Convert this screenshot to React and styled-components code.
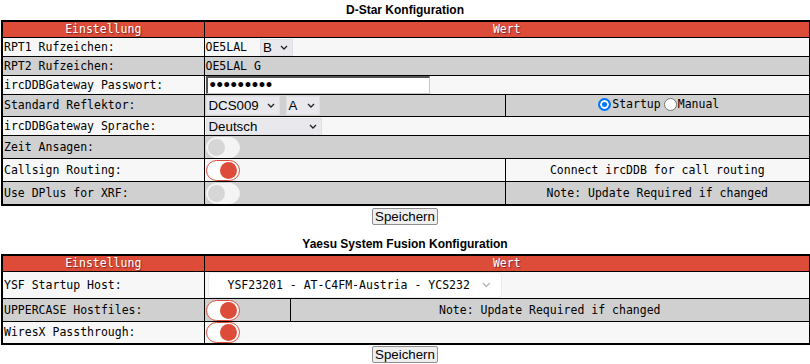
import React from 'react';
import styled, { createGlobalStyle } from 'styled-components';

const GlobalStyle = createGlobalStyle`
  body {
    margin: 0;
    background: #ffffff;
    font-family: "DejaVu Sans Mono", monospace;
  }
`;

const Page = styled.div`
  width: 808px;
  padding: 3px 1px 0;
`;

const Title = styled.h2`
  margin: 0;
  font-family: "Liberation Sans", Arial, sans-serif;
  font-size: 12px;
  font-weight: bold;
  text-align: center;
  line-height: 14px;
  height: 17px;
  color: #000;
`;

const Table = styled.table`
  width: 808px;
  table-layout: fixed;
  border-collapse: collapse;
  border: 2px solid #000;
  font-size: 11.5px;
  line-height: 15px;
`;

const HeadCell = styled.th`
  background: #dd4b39;
  color: #fff;
  font-weight: normal;
  height: 15px;
  padding: 0;
  text-align: center;
  border: 1px solid #000;
  text-shadow: 1px 1px 1px #7a2a20;
`;

const Row = styled.tr`
  background: ${(p) => (p.$alt ? '#d0d0d0' : '#f7f7f7')};
`;

const Label = styled.td`
  border: 1px solid #000;
  padding: 0 1px;
  height: ${(p) => p.$h || 18}px;
  white-space: nowrap;
  color: #000;
`;

const Cell = styled.td`
  border: 1px solid #000;
  padding: 0 1px;
  text-align: ${(p) => (p.$center ? 'center' : 'left')};
  white-space: nowrap;
  color: #000;
`;

const Gap = styled.span`
  display: inline-block;
  width: ${(p) => p.$w}px;
`;

const NativeSelect = styled.span`
  display: inline-flex;
  align-items: center;
  justify-content: space-between;
  box-sizing: border-box;
  width: ${(p) => p.$w}px;
  height: ${(p) => p.$h || 17}px;
  padding: 0 4px 0 2px;
  margin-right: ${(p) => p.$mr || 0}px;
  vertical-align: middle;
  background: #e9e9ed;
  border: 1px solid #e0e0e4;
  font-family: "Liberation Sans", Arial, sans-serif;
  font-size: 13.3px;
  line-height: 15px;
  color: #000;
`;

const Caret = () => (
  <svg width="8" height="5" viewBox="0 0 8 5">
    <path d="M1 1 L4 4 L7 1" fill="none" stroke="#222" strokeWidth="1.3" />
  </svg>
);

const PassInput = styled.span`
  display: inline-flex;
  align-items: center;
  box-sizing: border-box;
  width: 224px;
  height: 18px;
  padding: 0 1px;
  background: #fff;
  border: 1px solid #c8c8c8;
  border-left: 2px solid #555;
  border-top: 2px solid #555;
  font-size: 14px;
  letter-spacing: -1.4px;
  font-weight: bold;
  color: #000;
  vertical-align: middle;
`;

const Toggle = styled.span`
  position: relative;
  display: inline-block;
  box-sizing: border-box;
  width: 34px;
  height: 21px;
  vertical-align: middle;
  border-radius: 11px;
  background: ${(p) => (p.$on ? '#ffffff' : '#f4f4f4')};
  border: 1px solid ${(p) => (p.$on ? '#dd4b39' : '#f4f4f4')};
  &::after {
    content: '';
    position: absolute;
    top: 1px;
    ${(p) => (p.$on ? 'right: 2px;' : 'left: 1px;')}
    width: 17px;
    height: 17px;
    border-radius: 50%;
    background: ${(p) => (p.$on ? '#dd4b39' : '#d6d6d6')};
  }
`;

const RadioGroup = styled.span`
  display: inline-flex;
  align-items: center;
  font-size: 11.5px;
`;

const Radio = styled.span`
  display: inline-block;
  box-sizing: border-box;
  width: 13px;
  height: 13px;
  margin: 0 1px 0 3px;
  border-radius: 50%;
  background: #fff;
  border: ${(p) => (p.$on ? '2px solid #0075ff' : '1px solid #767676')};
  box-shadow: ${(p) => (p.$on ? 'inset 0 0 0 2px #fff' : 'none')};
  ${(p) => p.$on && 'background: #0075ff;'}
`;

const HostSelect = styled.span`
  display: inline-flex;
  align-items: center;
  box-sizing: border-box;
  width: 294px;
  height: 26px;
  margin: 0 0 0 2px;
  padding: 0 10px 0 19px;
  background: #fff;
  border: 1px solid #ececec;
  border-radius: 4px;
  font-size: 11.5px;
  gap: 12px;
  vertical-align: middle;
`;

const ButtonBar = styled.div`
  display: flex;
  justify-content: center;
  align-items: flex-start;
  padding-top: 2px;
  height: ${(p) => p.$h || 30}px;
`;

const Button = styled.button`
  font-family: "Liberation Sans", Arial, sans-serif;
  font-size: 13.3px;
  height: 17px;
  line-height: 13px;
  padding: 0 2px;
  background: #efefef;
  border: 1px solid #8f8f8f;
  border-radius: 2px;
  color: #000;
`;

function App() {
  return (
    <Page>
      <GlobalStyle />
      <Title>D-Star Konfiguration</Title>
      <Table>
        <colgroup>
          <col style={{ width: 202 }} />
          <col style={{ width: 301 }} />
          <col style={{ width: 305 }} />
        </colgroup>
        <thead>
          <tr>
            <HeadCell>Einstellung</HeadCell>
            <HeadCell colSpan={2}>Wert</HeadCell>
          </tr>
        </thead>
        <tbody>
          <Row>
            <Label>RPT1 Rufzeichen:</Label>
            <Cell colSpan={2}>
              OE5LAL<Gap $w={13} />
              <NativeSelect $w={33}>B<Caret /></NativeSelect>
            </Cell>
          </Row>
          <Row $alt>
            <Label>RPT2 Rufzeichen:</Label>
            <Cell colSpan={2}>OE5LAL G</Cell>
          </Row>
          <Row>
            <Label $h={18}>ircDDBGateway Passwort:</Label>
            <Cell colSpan={2}>
              <PassInput>•••••••••</PassInput>
            </Cell>
          </Row>
          <Row $alt>
            <Label $h={21}>Standard Reflektor:</Label>
            <Cell>
              <NativeSelect $w={74} $h={19} $mr={6}>DCS009<Caret /></NativeSelect>
              <NativeSelect $w={34} $h={19}>A<Caret /></NativeSelect>
            </Cell>
            <Cell $center>
              <RadioGroup>
                <Radio $on />Startup<Radio />Manual
              </RadioGroup>
            </Cell>
          </Row>
          <Row>
            <Label $h={18}>ircDDBGateway Sprache:</Label>
            <Cell colSpan={2}>
              <NativeSelect $w={116}>Deutsch<Caret /></NativeSelect>
            </Cell>
          </Row>
          <Row $alt>
            <Label $h={22}>Zeit Ansagen:</Label>
            <Cell colSpan={2}><Toggle /></Cell>
          </Row>
          <Row>
            <Label $h={22}>Callsign Routing:</Label>
            <Cell><Toggle $on /></Cell>
            <Cell $center>Connect ircDDB for call routing</Cell>
          </Row>
          <Row $alt>
            <Label $h={22}>Use DPlus for XRF:</Label>
            <Cell><Toggle /></Cell>
            <Cell $center>Note: Update Required if changed</Cell>
          </Row>
        </tbody>
      </Table>
      <ButtonBar $h={29}>
        <Button>Speichern</Button>
      </ButtonBar>

      <Title>Yaesu System Fusion Konfiguration</Title>
      <Table>
        <colgroup>
          <col style={{ width: 202 }} />
          <col style={{ width: 86 }} />
          <col style={{ width: 520 }} />
        </colgroup>
        <thead>
          <tr>
            <HeadCell>Einstellung</HeadCell>
            <HeadCell colSpan={2}>Wert</HeadCell>
          </tr>
        </thead>
        <tbody>
          <Row>
            <Label $h={26}>YSF Startup Host:</Label>
            <Cell colSpan={2}>
              <HostSelect>
                YSF23201 - AT-C4FM-Austria - YCS232
                <svg width="9" height="6" viewBox="0 0 9 6">
                  <path d="M1 1 L4.5 4.5 L8 1" fill="none" stroke="#b5b5b5" strokeWidth="1.4" />
                </svg>
              </HostSelect>
            </Cell>
          </Row>
          <Row $alt>
            <Label $h={22}>UPPERCASE Hostfiles:</Label>
            <Cell><Toggle $on /></Cell>
            <Cell $center>Note: Update Required if changed</Cell>
          </Row>
          <Row>
            <Label $h={21}>WiresX Passthrough:</Label>
            <Cell colSpan={2}><Toggle $on /></Cell>
          </Row>
        </tbody>
      </Table>
      <ButtonBar $h={20} style={{ paddingTop: 1 }}>
        <Button>Speichern</Button>
      </ButtonBar>
    </Page>
  );
}

export default App;
